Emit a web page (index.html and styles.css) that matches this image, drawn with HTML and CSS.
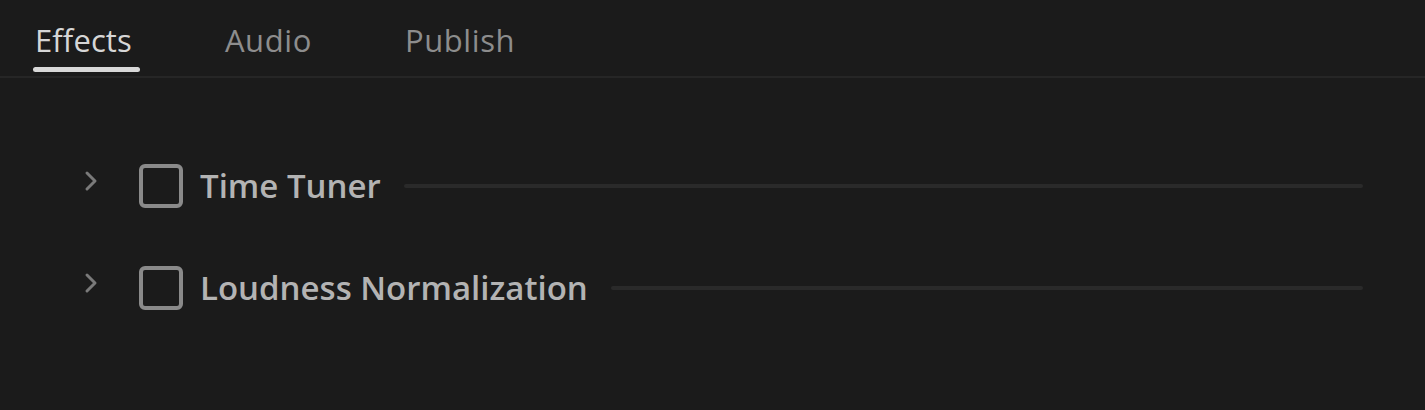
FILE: index.html
```html
<!DOCTYPE html>
<html>
<head>
<meta charset="utf-8">
<link rel="stylesheet" href="styles.css">
</head>
<body>
<div class="panel">
  <div class="tabs">
    <div class="tab active">Effects</div>
    <div class="tab">Audio</div>
    <div class="tab">Publish</div>
  </div>
  <div class="list">
    <div class="row">
      <svg class="chev" width="16" height="24" viewBox="0 0 16 24"><path d="M4 4 L12 12 L4 20" fill="none" stroke="#7a7a7a" stroke-width="3" stroke-linecap="round" stroke-linejoin="round"/></svg>
      <span class="box"></span>
      <span class="title">Time Tuner</span>
      <span class="rule"></span>
    </div>
    <div class="row">
      <svg class="chev" width="16" height="24" viewBox="0 0 16 24"><path d="M4 4 L12 12 L4 20" fill="none" stroke="#7a7a7a" stroke-width="3" stroke-linecap="round" stroke-linejoin="round"/></svg>
      <span class="box"></span>
      <span class="title">Loudness Normalization</span>
      <span class="rule"></span>
    </div>
  </div>
</div>
</body>
</html>
```
FILE: styles.css
```css
html, body {
  margin: 0;
  padding: 0;
  background: #1b1b1b;
}
.panel {
  width: 1425px;
  height: 410px;
  background: #1b1b1b;
  font-family: "Open Sans", "Liberation Sans", sans-serif;
  overflow: hidden;
}
.tabs {
  display: flex;
  height: 76px;
  border-bottom: 2px solid #262626;
  padding-left: 33px;
  box-sizing: content-box;
}
.tab {
  position: relative;
  font-size: 31px;
  color: #8d8d8d;
  padding: 18px 4px 0 2px;
  line-height: 44px;
  letter-spacing: 0.6px;
}
.tab + .tab {
  margin-left: 87px;
}
.tab.active {
  color: #d6d6d6;
  letter-spacing: 0.1px;
}
.tab.active::after {
  content: "";
  position: absolute;
  left: 0;
  right: -4px;
  top: 67px;
  height: 5px;
  border-radius: 3px;
  background: #d8d8d8;
}
.list {
  padding: 86px 62px 0 83px;
  display: flex;
  flex-direction: column;
  gap: 58px;
}
.row {
  display: flex;
  align-items: center;
  height: 44px;
}
.chev {
  margin-right: 40px;
  margin-top: -10px;
}
.box {
  width: 36px;
  height: 36px;
  border: 4px solid #8a8a8a;
  border-radius: 6px;
  margin-right: 17px;
}
.title {
  font-size: 33px;
  font-weight: 600;
  color: #b3b3b3;
  margin-right: 23px;
  white-space: nowrap;
  margin-top: -2px;
}
.rule {
  flex: 1;
  height: 4px;
  border-radius: 2px;
  background: #2a2a2a;
}
```
